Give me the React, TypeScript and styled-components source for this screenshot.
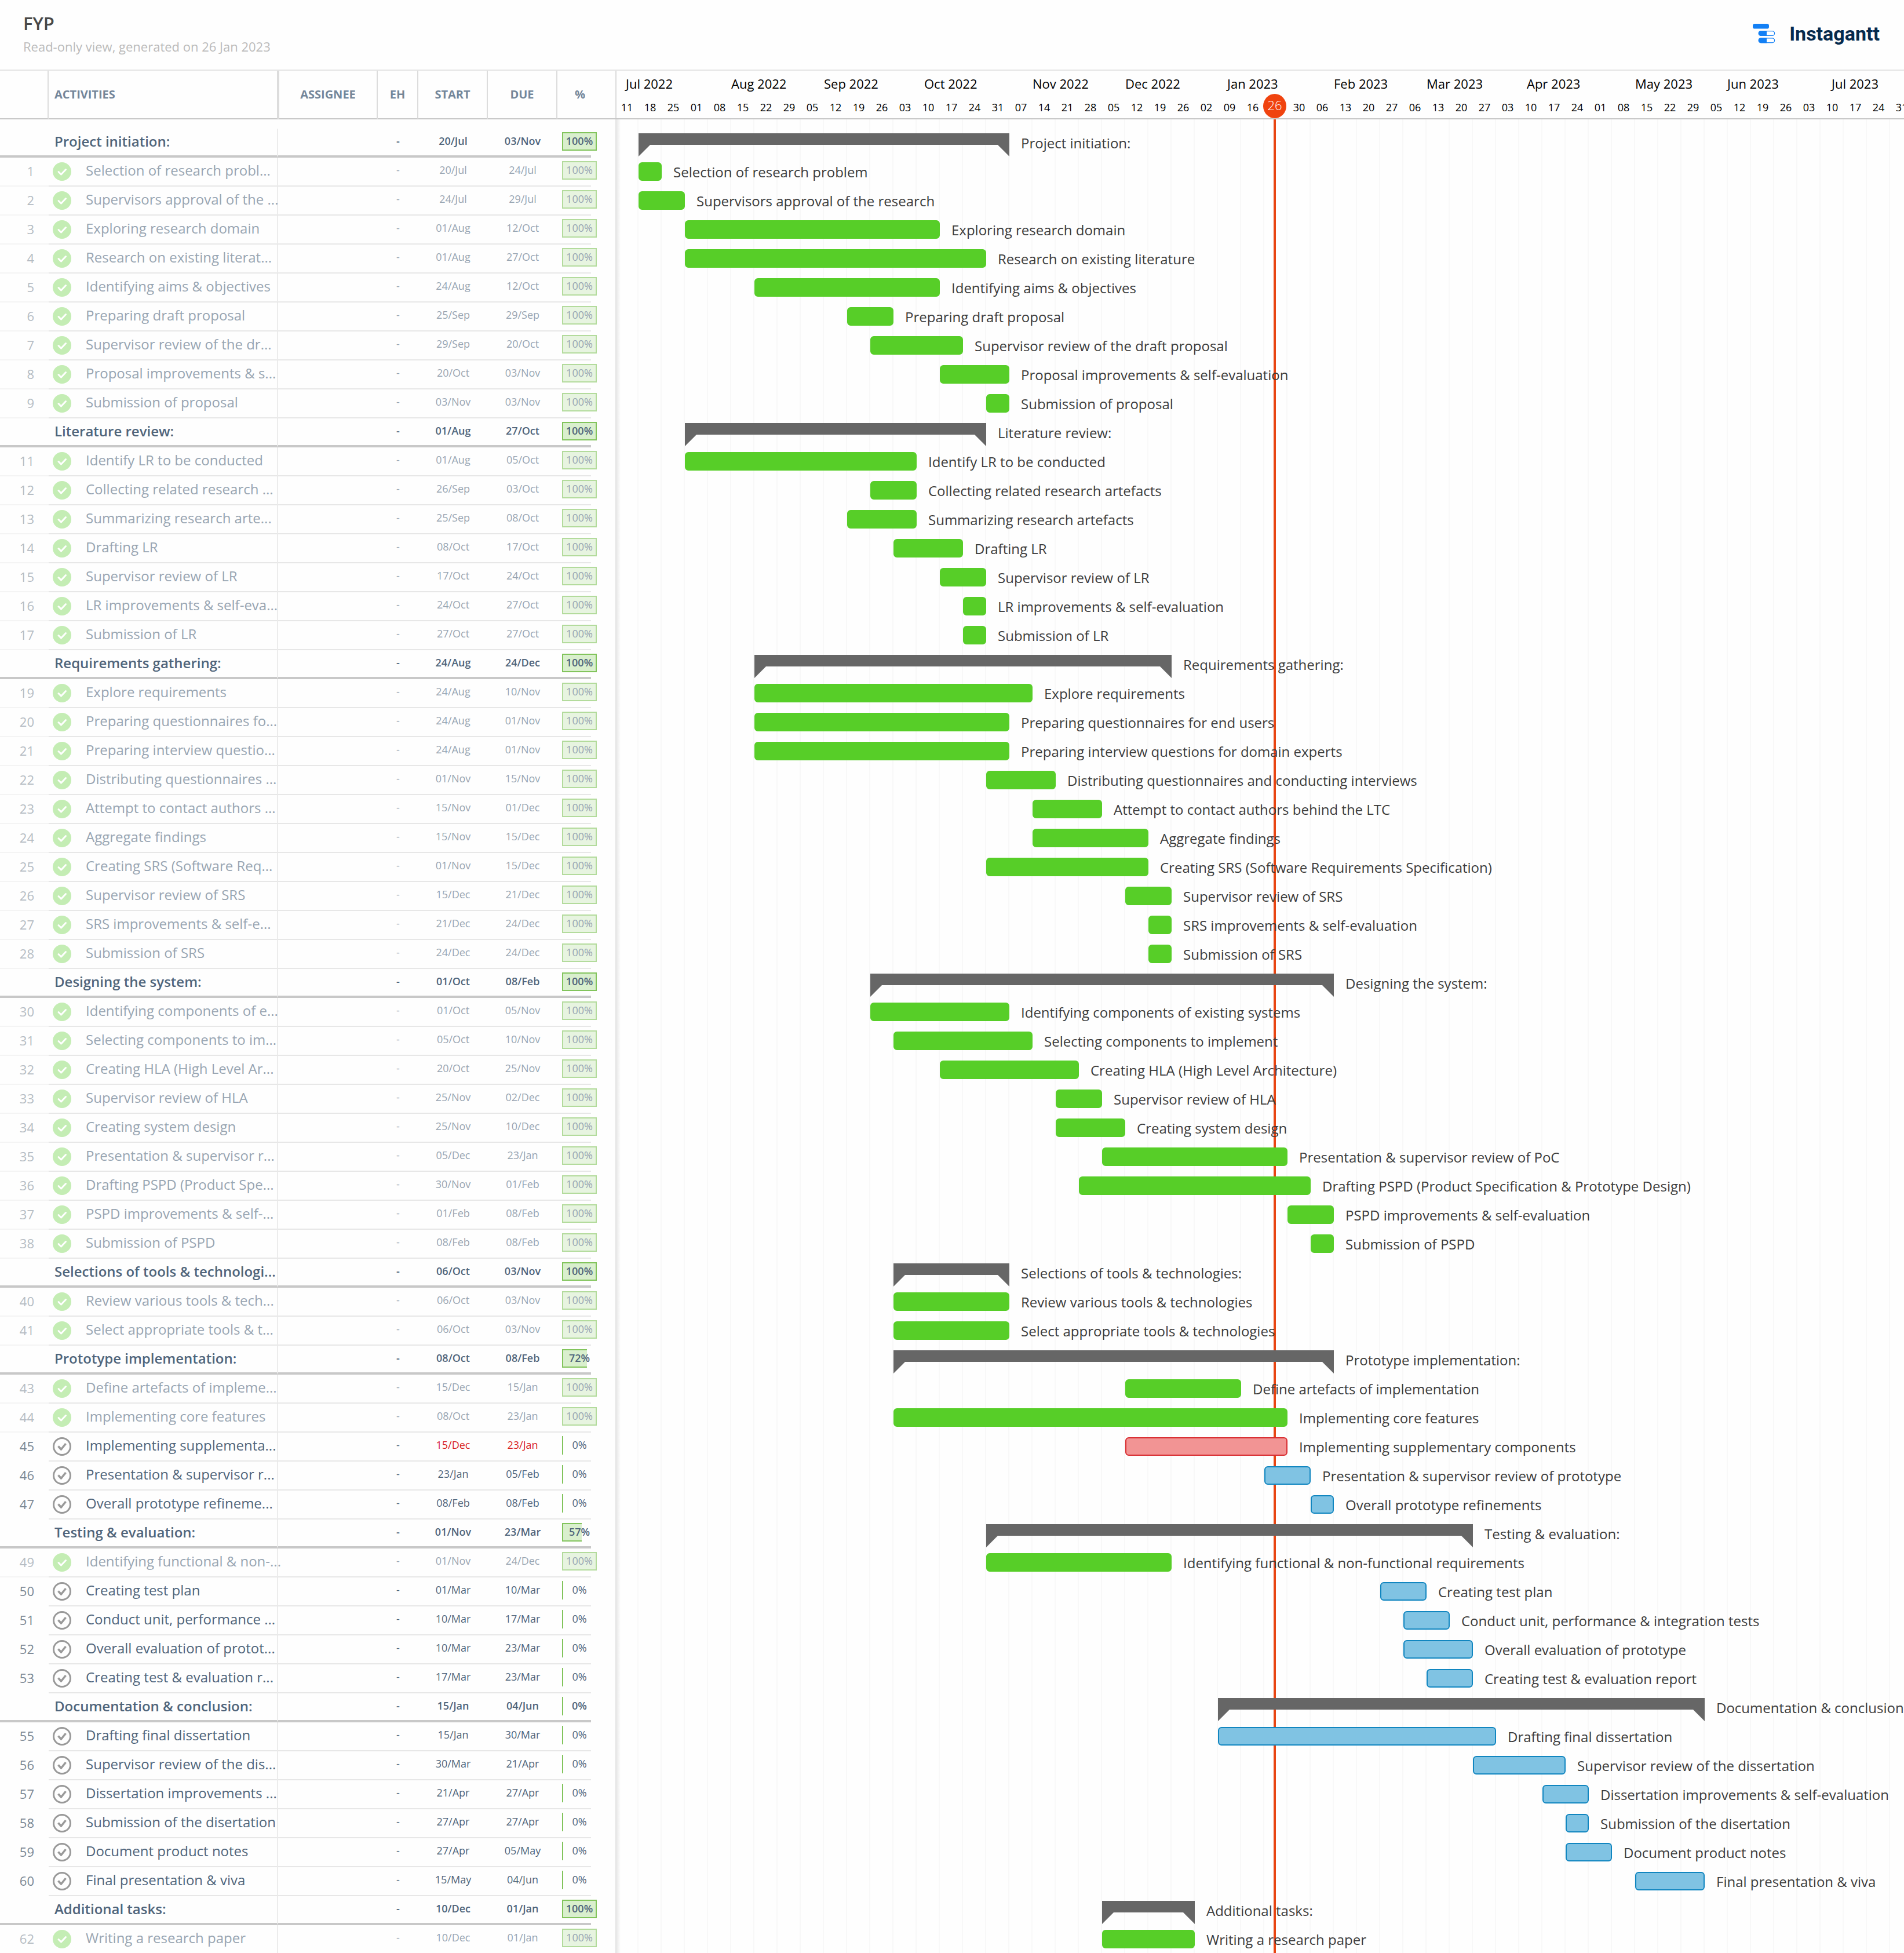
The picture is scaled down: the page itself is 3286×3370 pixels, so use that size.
import React from "react";
import styled, { createGlobalStyle } from "styled-components";

const WEEK = 40;

type Status = "group" | "done" | "open" | "late";

interface Item {
  id: number;
  name: string;
  start: string;
  due: string;
  pct: number;
  from: number;
  to: number;
  status: Status;
}

const group = (id: number, name: string, start: string, due: string, pct: number, from: number, to: number): Item => ({
  id, name, start, due, pct, from, to, status: "group",
});
const done = (id: number, name: string, start: string, due: string, from: number, to: number): Item => ({
  id, name, start, due, pct: 100, from, to, status: "done",
});
const open = (id: number, name: string, start: string, due: string, from: number, to: number, status: Status = "open"): Item => ({
  id, name, start, due, pct: 0, from, to, status,
});

/* from / to are week columns, counted from 11 Jul 2022 */
const items: Item[] = [
  group(0, "Project initiation:", "20/Jul", "03/Nov", 100, 1, 17),
  done(1, "Selection of research problem", "20/Jul", "24/Jul", 1, 2),
  done(2, "Supervisors approval of the research", "24/Jul", "29/Jul", 1, 3),
  done(3, "Exploring research domain", "01/Aug", "12/Oct", 3, 14),
  done(4, "Research on existing literature", "01/Aug", "27/Oct", 3, 16),
  done(5, "Identifying aims & objectives", "24/Aug", "12/Oct", 6, 14),
  done(6, "Preparing draft proposal", "25/Sep", "29/Sep", 10, 12),
  done(7, "Supervisor review of the draft proposal", "29/Sep", "20/Oct", 11, 15),
  done(8, "Proposal improvements & self-evaluation", "20/Oct", "03/Nov", 14, 17),
  done(9, "Submission of proposal", "03/Nov", "03/Nov", 16, 17),
  group(10, "Literature review:", "01/Aug", "27/Oct", 100, 3, 16),
  done(11, "Identify LR to be conducted", "01/Aug", "05/Oct", 3, 13),
  done(12, "Collecting related research artefacts", "26/Sep", "03/Oct", 11, 13),
  done(13, "Summarizing research artefacts", "25/Sep", "08/Oct", 10, 13),
  done(14, "Drafting LR", "08/Oct", "17/Oct", 12, 15),
  done(15, "Supervisor review of LR", "17/Oct", "24/Oct", 14, 16),
  done(16, "LR improvements & self-evaluation", "24/Oct", "27/Oct", 15, 16),
  done(17, "Submission of LR", "27/Oct", "27/Oct", 15, 16),
  group(18, "Requirements gathering:", "24/Aug", "24/Dec", 100, 6, 24),
  done(19, "Explore requirements", "24/Aug", "10/Nov", 6, 18),
  done(20, "Preparing questionnaires for end users", "24/Aug", "01/Nov", 6, 17),
  done(21, "Preparing interview questions for domain experts", "24/Aug", "01/Nov", 6, 17),
  done(22, "Distributing questionnaires and conducting interviews", "01/Nov", "15/Nov", 16, 19),
  done(23, "Attempt to contact authors behind the LTC", "15/Nov", "01/Dec", 18, 21),
  done(24, "Aggregate findings", "15/Nov", "15/Dec", 18, 23),
  done(25, "Creating SRS (Software Requirements Specification)", "01/Nov", "15/Dec", 16, 23),
  done(26, "Supervisor review of SRS", "15/Dec", "21/Dec", 22, 24),
  done(27, "SRS improvements & self-evaluation", "21/Dec", "24/Dec", 23, 24),
  done(28, "Submission of SRS", "24/Dec", "24/Dec", 23, 24),
  group(29, "Designing the system:", "01/Oct", "08/Feb", 100, 11, 31),
  done(30, "Identifying components of existing systems", "01/Oct", "05/Nov", 11, 17),
  done(31, "Selecting components to implement", "05/Oct", "10/Nov", 12, 18),
  done(32, "Creating HLA (High Level Architecture)", "20/Oct", "25/Nov", 14, 20),
  done(33, "Supervisor review of HLA", "25/Nov", "02/Dec", 19, 21),
  done(34, "Creating system design", "25/Nov", "10/Dec", 19, 22),
  done(35, "Presentation & supervisor review of PoC", "05/Dec", "23/Jan", 21, 29),
  done(36, "Drafting PSPD (Product Specification & Prototype Design)", "30/Nov", "01/Feb", 20, 30),
  done(37, "PSPD improvements & self-evaluation", "01/Feb", "08/Feb", 29, 31),
  done(38, "Submission of PSPD", "08/Feb", "08/Feb", 30, 31),
  group(39, "Selections of tools & technologies:", "06/Oct", "03/Nov", 100, 12, 17),
  done(40, "Review various tools & technologies", "06/Oct", "03/Nov", 12, 17),
  done(41, "Select appropriate tools & technologies", "06/Oct", "03/Nov", 12, 17),
  group(42, "Prototype implementation:", "08/Oct", "08/Feb", 72, 12, 31),
  done(43, "Define artefacts of implementation", "15/Dec", "15/Jan", 22, 27),
  done(44, "Implementing core features", "08/Oct", "23/Jan", 12, 29),
  open(45, "Implementing supplementary components", "15/Dec", "23/Jan", 22, 29, "late"),
  open(46, "Presentation & supervisor review of prototype", "23/Jan", "05/Feb", 28, 30),
  open(47, "Overall prototype refinements", "08/Feb", "08/Feb", 30, 31),
  group(48, "Testing & evaluation:", "01/Nov", "23/Mar", 57, 16, 37),
  done(49, "Identifying functional & non-functional requirements", "01/Nov", "24/Dec", 16, 24),
  open(50, "Creating test plan", "01/Mar", "10/Mar", 33, 35),
  open(51, "Conduct unit, performance & integration tests", "10/Mar", "17/Mar", 34, 36),
  open(52, "Overall evaluation of prototype", "10/Mar", "23/Mar", 34, 37),
  open(53, "Creating test & evaluation report", "17/Mar", "23/Mar", 35, 37),
  group(54, "Documentation & conclusion:", "15/Jan", "04/Jun", 0, 26, 47),
  open(55, "Drafting final dissertation", "15/Jan", "30/Mar", 26, 38),
  open(56, "Supervisor review of the dissertation", "30/Mar", "21/Apr", 37, 41),
  open(57, "Dissertation improvements & self-evaluation", "21/Apr", "27/Apr", 40, 42),
  open(58, "Submission of the disertation", "27/Apr", "27/Apr", 41, 42),
  open(59, "Document product notes", "27/Apr", "05/May", 41, 43),
  open(60, "Final presentation & viva", "15/May", "04/Jun", 44, 47),
  group(61, "Additional tasks:", "10/Dec", "01/Jan", 100, 21, 25),
  done(62, "Writing a research paper", "10/Dec", "01/Jan", 21, 25),
];

/* names too long for the activities column, as shortened there */
const shortNames: Record<number, string> = {
  1: "Selection of research probl...",
  2: "Supervisors approval of the ...",
  4: "Research on existing literat...",
  7: "Supervisor review of the dr...",
  8: "Proposal improvements & s...",
  12: "Collecting related research ...",
  13: "Summarizing research arte...",
  16: "LR improvements & self-eva...",
  20: "Preparing questionnaires fo...",
  21: "Preparing interview questio...",
  22: "Distributing questionnaires ...",
  23: "Attempt to contact authors ...",
  25: "Creating SRS (Software Req...",
  27: "SRS improvements & self-e...",
  30: "Identifying components of e...",
  31: "Selecting components to im...",
  32: "Creating HLA (High Level Ar...",
  35: "Presentation & supervisor r...",
  36: "Drafting PSPD (Product Spe...",
  37: "PSPD improvements & self-...",
  39: "Selections of tools & technologi...",
  40: "Review various tools & tech...",
  41: "Select appropriate tools & t...",
  43: "Define artefacts of impleme...",
  45: "Implementing supplementa...",
  46: "Presentation & supervisor r...",
  47: "Overall prototype refineme...",
  49: "Identifying functional & non-...",
  51: "Conduct unit, performance ...",
  52: "Overall evaluation of protot...",
  53: "Creating test & evaluation r...",
  56: "Supervisor review of the dis...",
  57: "Dissertation improvements ...",
};

/* label start, in pixels from the left of the axis */
const months: [string, number][] = [
  ["Jul 2022", 18], ["Aug 2022", 200], ["Sep 2022", 360], ["Oct 2022", 533],
  ["Nov 2022", 720], ["Dec 2022", 880], ["Jan 2023", 1056], ["Feb 2023", 1240],
  ["Mar 2023", 1400], ["Apr 2023", 1573], ["May 2023", 1760], ["Jun 2023", 1919],
  ["Jul 2023", 2099],
];

const TODAY_WEEK = 28;

const weeks: string[] = Array.from({ length: 56 }, (_, i) => {
  const d = new Date(Date.UTC(2022, 6, 11 + i * 7));
  return String(d.getUTCDate()).padStart(2, "0");
});

const GlobalStyle = createGlobalStyle`
  *, *::before, *::after { box-sizing: border-box; }
  body {
    margin: 0;
    background: #fefefe;
    font-family: "Open Sans", "Noto Sans", sans-serif;
  }
`;

const Page = styled.div`
  display: flex;
  flex-direction: column;
  height: 100vh;
  overflow: hidden;
`;

const TopBar = styled.header`
  display: flex;
  flex: none;
  justify-content: space-between;
  padding: 16px 42px 20px 40px;
  border-bottom: 2px solid #e4e4e4;
`;

const Title = styled.h1`
  margin: 0;
  font-size: 31px;
  line-height: 48px;
  font-weight: 600;
  color: #484848;
`;

const Subtitle = styled.p`
  margin: 0;
  font-size: 22px;
  line-height: 32px;
  color: #bbb;
`;

const Brand = styled.div`
  display: flex;
  align-items: center;
  gap: 24px;
  height: 84px;
  font-family: Roboto, sans-serif;
  font-size: 34px;
  font-weight: 700;
  color: #062a4d;
`;

const Main = styled.main`
  display: flex;
  flex: 1;
  align-items: flex-start;
`;

const TaskPane = styled.section`
  flex: none;
  width: 1062px;
`;

const Table = styled.table`
  width: 100%;
  table-layout: fixed;
  border-collapse: separate;
  border-spacing: 0;

  tbody::before {
    content: "";
    display: block;
    height: 16px;
  }
`;

const Col = styled.col<{ $w: number }>`
  width: ${(p) => p.$w}px;
`;

const HeadCell = styled.th<{ $kind?: "left" | "after" | "last" }>`
  height: 84px;
  padding: 0 ${(p) => (p.$kind === "last" ? 22 : 0)}px 0 ${(p) => (p.$kind === "left" ? 10 : 0)}px;
  text-align: ${(p) => (p.$kind === "left" ? "left" : "center")};
  font-size: 20px;
  line-height: 80px;
  font-weight: 700;
  color: #74869a;
  border-bottom: 2px solid #c8c8c8;
  border-right: ${(p) => (p.$kind === "last" ? "none" : "2px solid #dcdcdc")};
  border-left: ${(p) => (p.$kind === "after" ? "2px solid #dcdcdc" : "none")};
`;

const Row = styled.tr<{ $status: Status }>`
  color: ${(p) => (p.$status === "done" ? "#98a5b2" : "#50657b")};
  font-weight: ${(p) => (p.$status === "group" ? 600 : 400)};

  td {
    border-bottom: ${(p) => (p.$status === "group" ? "4px solid #c8c8c8" : "2px solid #e7e7e7")};
  }
  td:first-child {
    border-bottom-color: ${(p) => ({ group: "#c8c8c8", done: "#f4f4f4", open: "#fefefe", late: "#fefefe" })[p.$status]};
  }
`;

const Cell = styled.td`
  height: 50px;
  padding: 0;
  vertical-align: top;
  text-align: center;
  font-size: 18px;
  line-height: 42px;
`;

const IndexCell = styled(Cell)<{ $dim: boolean }>`
  padding-right: 25px;
  text-align: right;
  font-size: 22px;
  line-height: 46px;
  color: ${(p) => (p.$dim ? "#b5bcc3" : "#7b8894")};
`;

const NameCell = styled(Cell)`
  border-right: 2px solid #ececec;
`;

const NameBox = styled.div<{ $group: boolean }>`
  display: flex;
  padding-left: ${(p) => (p.$group ? 10 : 7)}px;
  gap: 25px;
`;

const Name = styled.span`
  flex: none;
  white-space: nowrap;
  font-size: 24px;
  line-height: 44px;
`;

const CheckLabel = styled.label`
  position: relative;
  flex: none;
  width: 32px;
  height: 32px;
  margin-top: 8px;

  input {
    position: absolute;
    inset: 0;
    width: 32px;
    height: 32px;
    margin: 0;
    opacity: 0;
  }
  svg {
    display: block;
  }
`;

const DateText = styled.span<{ $late: boolean }>`
  color: ${(p) => (p.$late ? "#d8201c" : "inherit")};
`;

const Meter = styled.div`
  position: relative;
  width: 60px;
  height: 32px;
  margin: 6px 0 0 8px;
  line-height: 30px;
`;

const Fill = styled.div<{ $full: boolean; $dim: boolean }>`
  position: absolute;
  inset: 0 auto 0 0;
  min-width: 2px;
  background: #d9efcd;
  border: 2px solid #82c45c;
  border-right-width: ${(p) => (p.$full ? 2 : 0)}px;
  opacity: ${(p) => (p.$dim ? 0.6 : 1)};
`;

const MeterText = styled.span`
  position: relative;
`;

const Timeline = styled.section`
  flex: 1;
  min-width: 0;
  overflow: hidden;
`;

const Axis = styled.div`
  height: 84px;
  border-bottom: 2px solid #c8c8c8;
  box-shadow: inset 2px 0 #dcdcdc;
  color: #000;
`;

const MonthRow = styled.div`
  display: flex;
  padding-left: 18px;
  font-size: 22px;
  line-height: 44px;
  white-space: nowrap;
`;

const Month = styled.span`
  flex: none;
`;

const WeekRow = styled.div`
  display: flex;
  font-size: 18px;
  line-height: 38px;
  text-align: center;
`;

const Week = styled.span`
  position: relative;
  flex: none;
  width: ${WEEK}px;
  height: 38px;
`;

const TodayBadge = styled.span`
  position: absolute;
  left: -2px;
  bottom: 0;
  width: 40px;
  height: 42px;
  border-radius: 50%;
  background: #f0430f;
  color: #fff;
  font-size: 22px;
  font-weight: 300;
  line-height: 38px;
`;

const Chart = styled.div`
  position: relative;
  padding-top: 16px;
  background:
    linear-gradient(to right, #e2e2e2, rgba(254, 254, 254, 0)) 0 0 / 9px 100% no-repeat,
    repeating-linear-gradient(to right, transparent 0 38px, #f8f8f8 38px 40px);
`;

const TodayLine = styled.div`
  position: absolute;
  top: 0;
  bottom: 0;
  width: 4px;
  background: #e84512;
`;

const BarRow = styled.div`
  position: relative;
  display: flex;
  height: 50px;
  gap: 20px;
`;

const palette = {
  done: ["#57ce28", "#57ce28"],
  open: ["#80c3e3", "#1186c0"],
  late: ["#f29494", "#d82c30"],
};

const Bar = styled.div<{ $status: "done" | "open" | "late" }>`
  flex: none;
  height: 32px;
  margin-top: 8px;
  border-radius: 6px;
  background: ${(p) => palette[p.$status][0]};
  border: 2px solid ${(p) => palette[p.$status][1]};
`;

const GroupBar = styled.div`
  flex: none;
  height: 40px;
  margin-top: 8px;
  background: #666;
  clip-path: polygon(0 0, 100% 0, 100% 100%, calc(100% - 20px) 50%, 20px 50%, 0 100%);
`;

const BarLabel = styled.span`
  flex: none;
  font-size: 24px;
  line-height: 50px;
  white-space: nowrap;
  color: #3c3c3c;
`;

function Check({ item }: { item: Item }) {
  const isDone = item.status === "done";
  return (
    <CheckLabel>
      <input type="checkbox" checked={isDone} readOnly aria-label={item.name} />
      <svg width="32" height="32" viewBox="0 0 32 32" fill="none" aria-hidden="true">
        {isDone ? (
          <>
            <circle cx="16" cy="16" r="16" fill="#c4edb4" />
            <path d="M10 16.5l4.5 4.5 8-8.5" stroke="#fff" strokeWidth="3" strokeLinecap="round" strokeLinejoin="round" />
          </>
        ) : (
          <>
            <circle cx="16" cy="16" r="14.5" stroke="#999" strokeWidth="3" />
            <path d="M9.5 15.5l5 5.5 8-10" stroke="#999" strokeWidth="3.6" strokeLinejoin="round" />
          </>
        )}
      </svg>
    </CheckLabel>
  );
}

function Logo() {
  return (
    <svg width="39" height="34" viewBox="0 0 39 34" aria-hidden="true">
      <rect x="0" y="0" width="28" height="8.6" rx="3.4" fill="#1380f5" />
      {[12, 24.3].map((y) => (
        <g key={y}>
          <rect x="10.6" y={y + 0.6} width="27" height="7.8" rx="3.9" fill="#fff" stroke="#1380f5" strokeWidth="1.2" />
          <path d={`M24 ${y}v9h-10a4.5 4.5 0 0 1 0-9z`} fill="#1380f5" />
        </g>
      ))}
    </svg>
  );
}

function TaskRow({ item }: { item: Item }) {
  const isGroup = item.status === "group";
  const isDone = item.status === "done";
  const late = item.status === "late";
  return (
    <Row $status={item.status}>
      <IndexCell $dim={isDone}>{isGroup ? "" : item.id}</IndexCell>
      <NameCell>
        <NameBox $group={isGroup}>
          {!isGroup && <Check item={item} />}
          <Name>{shortNames[item.id] ?? item.name}</Name>
        </NameBox>
      </NameCell>
      <Cell />
      <Cell>-</Cell>
      <Cell><DateText $late={late}>{item.start}</DateText></Cell>
      <Cell><DateText $late={late}>{item.due}</DateText></Cell>
      <Cell>
        <Meter>
          <Fill $full={item.pct === 100} $dim={isDone} style={{ width: `${item.pct}%` }} />
          <MeterText>{item.pct}%</MeterText>
        </Meter>
      </Cell>
    </Row>
  );
}

export default function App() {
  return (
    <Page>
      <GlobalStyle />
      <TopBar>
        <div>
          <Title>FYP</Title>
          <Subtitle>Read-only view, generated on 26 Jan 2023</Subtitle>
        </div>
        <Brand>
          <Logo />
          <span>Instagantt</span>
        </Brand>
      </TopBar>
      <Main>
        <TaskPane>
          <Table>
            <colgroup>
              {[84, 396, 172, 70, 120, 120, 58, 42].map((w, i) => (
                <Col key={i} $w={w} />
              ))}
            </colgroup>
            <thead>
              <tr>
                <HeadCell aria-label="Number" />
                <HeadCell $kind="left">ACTIVITIES</HeadCell>
                <HeadCell $kind="after">ASSIGNEE</HeadCell>
                <HeadCell>EH</HeadCell>
                <HeadCell>START</HeadCell>
                <HeadCell>DUE</HeadCell>
                <HeadCell $kind="last" colSpan={2}>%</HeadCell>
              </tr>
            </thead>
            <tbody>
              {items.map((item) => (
                <TaskRow key={item.id} item={item} />
              ))}
            </tbody>
          </Table>
        </TaskPane>
        <Timeline>
          <Axis>
            <MonthRow>
              {months.map(([label, x], i) => (
                <Month key={label} style={{ width: (months[i + 1]?.[1] ?? x + 120) - x }}>
                  {label}
                </Month>
              ))}
            </MonthRow>
            <WeekRow>
              {weeks.map((day, i) => (
                <Week key={i}>{i === TODAY_WEEK ? <TodayBadge>26</TodayBadge> : day}</Week>
              ))}
            </WeekRow>
          </Axis>
          <Chart>
            <TodayLine style={{ left: TODAY_WEEK * WEEK + 16 }} />
            {items.map((item) => {
              const box = { marginLeft: item.from * WEEK, width: (item.to - item.from) * WEEK };
              return (
                <BarRow key={item.id}>
                  {item.status === "group" ? <GroupBar style={box} /> : <Bar $status={item.status} style={box} />}
                  <BarLabel>{item.name}</BarLabel>
                </BarRow>
              );
            })}
          </Chart>
        </Timeline>
      </Main>
    </Page>
  );
}
